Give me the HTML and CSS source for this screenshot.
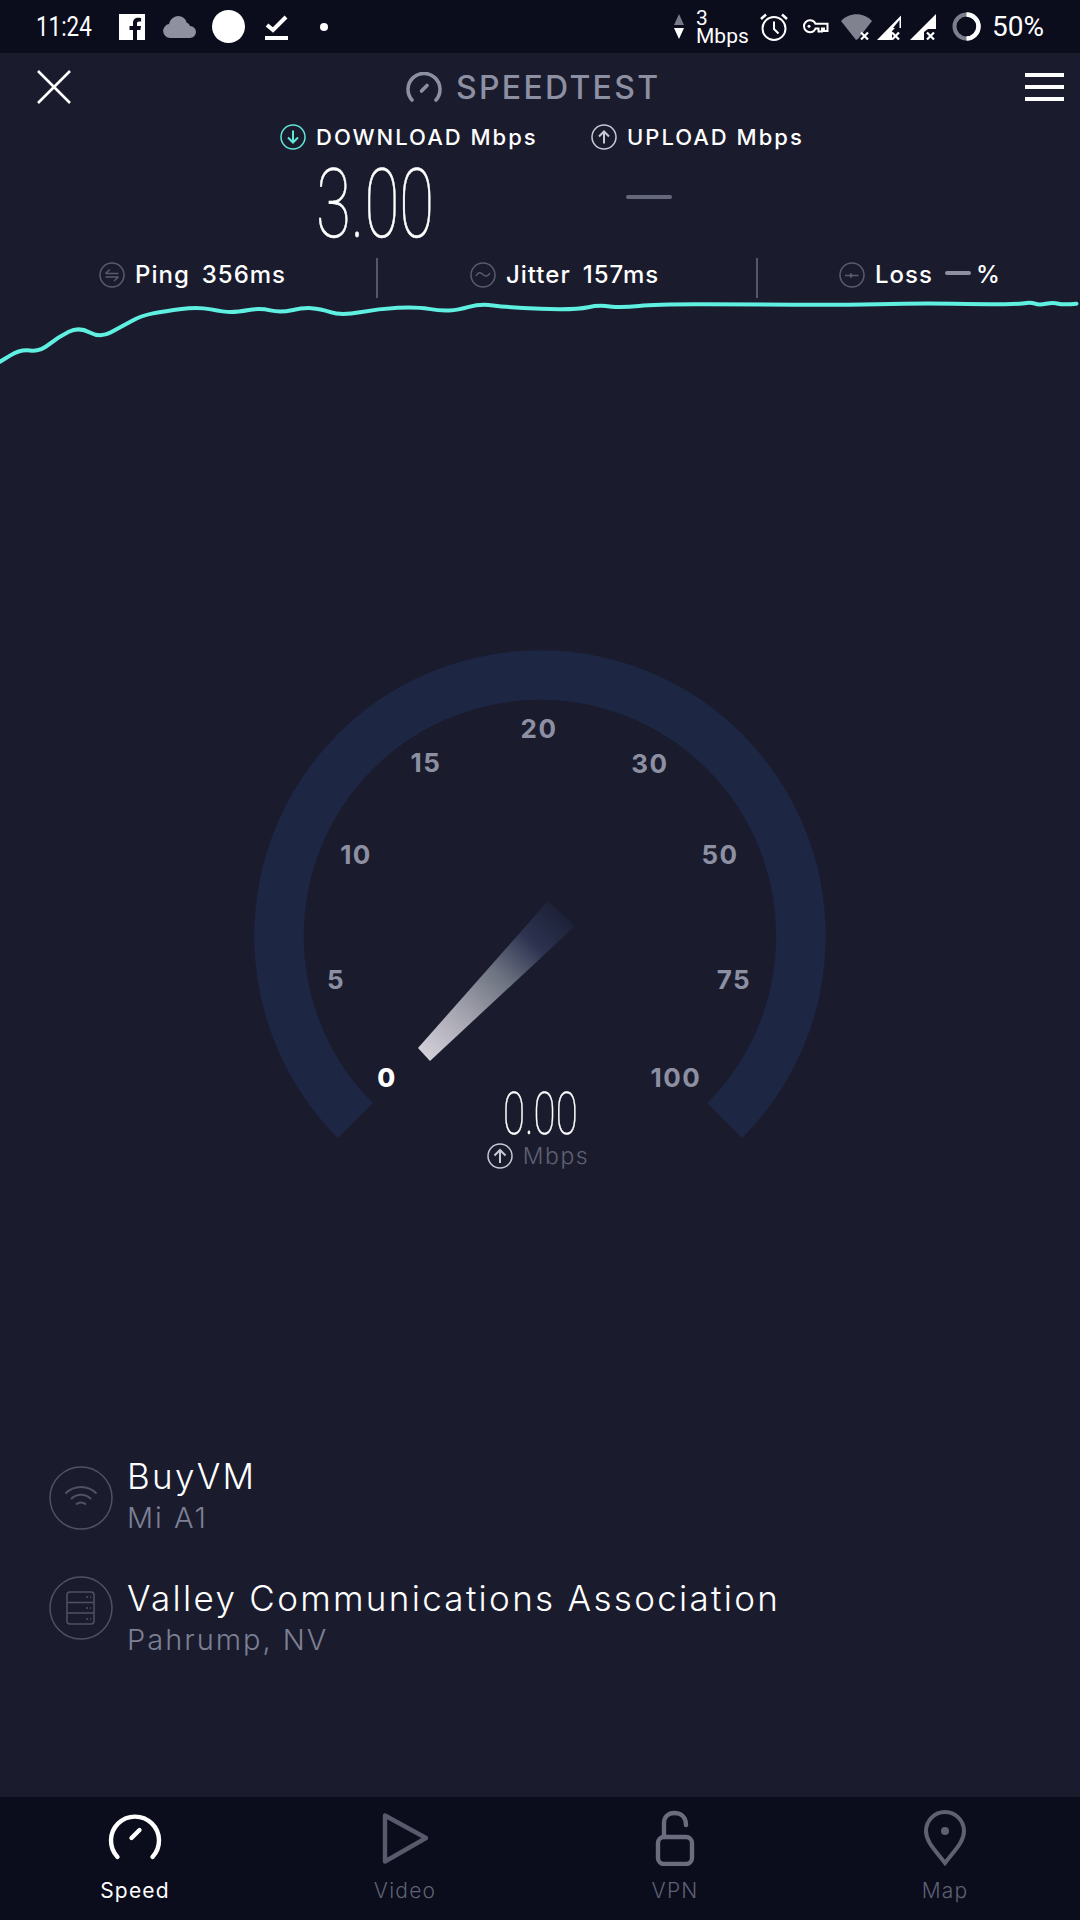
FILE: index.html
```html
<!DOCTYPE html>
<html lang="en">
<head>
<meta charset="utf-8">
<title>Speedtest</title>
<link rel="stylesheet" href="styles.css">
</head>
<body>
<div class="screen">
  <header class="status">
    <div class="status-left">
      <span class="status-time"><span class="status-time-text">11:24</span></span>
      <svg class="ic-f" viewBox="0 0 26 26"><path fill="#fff" d="M0 0h26v26H18v-10h3.400l.6-4h-4V9.500c0-1.200.5-2 2-2h2.100V3.900c-.6-.1-1.800-.2-3-.2-3 0-5.100 1.800-5.100 5.200V12H10.500v4H14v10H0z"/></svg>
      <svg class="ic-cloud" viewBox="0 0 33 22"><path fill="#8e90a0" d="M7 22a7 7 0 0 1-1-13.900A9.500 9.500 0 0 1 15 0a9 9 0 0 1 8.600 6.500A6 6 0 0 1 27 10a6 6 0 0 1 6 6 6 6 0 0 1-6 6z"/></svg>
      <span class="status-disc"></span>
      <svg class="ic-check" viewBox="0 0 23 26"><path fill="none" stroke="#fff" stroke-width="4" d="M2 11l6 5L21 3"/><path fill="#fff" d="M0 22h23v4H0z"/></svg>
      <span class="status-dot"></span>
    </div>
    <div class="status-right">
      <svg class="ic-updown" viewBox="0 0 12 25"><path fill="#77798a" d="M6 0l5 11H1z"/><path fill="#fff" d="M1 14h10L6 25z"/></svg>
      <span class="status-speed"><span>3</span><span>Mbps</span></span>
      <svg class="ic-alarm" viewBox="0 0 28 28"><g fill="none" stroke="#fff" stroke-width="2"><circle cx="14" cy="15.500" r="11.500"/><path d="M14 8.500v7.500l4.500 4.500"/></g><path fill="none" stroke="#fff" stroke-width="2.500" d="M1 6l5-4.500M27 6l-5-4.500"/></svg>
      <svg class="ic-key" viewBox="0 0 27 15"><path fill="none" stroke="#fff" stroke-width="2" d="M8 1.200a6 6 0 1 0 0 12 6 6 0 0 0 5.500-3.600h3v3h3.500v-3h2v2.500h3.500V4.800H13.500A6 6 0 0 0 8 1.200z"/><circle cx="7" cy="7.200" r="1.500" fill="#fff"/></svg>
      <svg class="ic-wifi" viewBox="0 0 31 26"><path fill="#80828f" d="M0 7C8-2 23-2 31 7L17 25 15 26z"/><path stroke="#fff" stroke-width="2.200" d="M20 18.500l7 7M27 18.500l-7 7"/></svg>
      <svg class="ic-sig" viewBox="0 0 26 26"><path fill="#fff" d="M0 26L24 1.500V14h-6l-3 3v9z"/><path fill="#0b0c1c" d="M16 14L22.500 6v8z"/><path stroke="#fff" stroke-width="2.200" d="M15 18.500l7 7M22 18.500l-7 7"/></svg>
      <svg class="ic-sig ic-sig-b" viewBox="0 0 26 26"><path fill="#fff" d="M0 26L26 0v15h-8l-4 3v8z"/><path stroke="#fff" stroke-width="2.200" d="M17 18.500l7 7M24 18.500l-7 7"/></svg>
      <svg class="ic-batt" viewBox="0 0 29 29"><circle cx="14.500" cy="14.500" r="12" fill="none" stroke="#7c7e8c" stroke-width="4"/><path fill="none" stroke="#fff" stroke-width="4.500" d="M14.500 2.500a12 12 0 0 1 0 24"/></svg>
      <span class="status-batt">50%</span>
    </div>
  </header>

  <div class="toolbar">
    <svg class="ic-close" viewBox="0 0 34 34"><path fill="none" stroke="#fff" stroke-width="2.600" d="M1 1l32 32M33 1L1 33"/></svg>
    <div class="brand">
      <svg class="ic-brand" viewBox="0 0 36 30"><g fill="none" stroke="#8d90a2" stroke-width="3.600" stroke-linecap="round"><path d="M6 28A16 16 0 1 1 30 28"/><path d="M15.500 19l5.500-5.500"/></g></svg>
      <span class="brand-name">SPEEDTEST</span>
    </div>
    <div class="menu"><span></span><span></span><span></span></div>
  </div>

  <section class="speeds">
    <div class="speed-col">
      <div class="speed-head">
        <svg class="ic-round" viewBox="0 0 26 26"><g fill="none" stroke="#62e6da" stroke-width="1.500"><circle cx="13" cy="13" r="12"/><path stroke-width="2" d="M13 6.500v12M8 13.500l5 5 5-5"/></g></svg>
        <span>DOWNLOAD Mbps</span>
      </div>
      <div class="speed-value"><span class="thin-num">3.00</span></div>
    </div>
    <div class="speed-col">
      <div class="speed-head">
        <svg class="ic-round" viewBox="0 0 26 26"><g fill="none" stroke="#c9c9d6" stroke-width="1.500"><circle cx="13" cy="13" r="12"/><path stroke-width="2" d="M13 19.500v-12M8 12.500l5-5 5 5"/></g></svg>
        <span>UPLOAD Mbps</span>
      </div>
      <div class="speed-dash"></div>
    </div>
  </section>

  <section class="stats">
    <div class="stat stat-ping">
      <svg class="ic-round" viewBox="0 0 26 26"><g fill="none" stroke="#595c6e" stroke-width="1.500"><circle cx="13" cy="13" r="12"/><path d="M6.500 11.500h13M11 7.500l-4.500 4M6.500 15h13M15 19l4.500-4"/></g></svg>
      <span class="stat-label">Ping</span><span class="stat-value">356ms</span>
    </div>
    <div class="stat stat-jitter">
      <svg class="ic-round" viewBox="0 0 26 26"><g fill="none" stroke="#595c6e" stroke-width="1.500"><circle cx="13" cy="13" r="12"/><path d="M6 14c2-4 4.500-4 7-1.500s5 2 7-1.500"/></g></svg>
      <span class="stat-label">Jitter</span><span class="stat-value">157ms</span>
    </div>
    <div class="stat stat-loss">
      <svg class="ic-round" viewBox="0 0 26 26"><g fill="none" stroke="#595c6e" stroke-width="1.500"><circle cx="13" cy="13" r="12"/><path d="M6 13.500h5l1.500-2-1 4 1.500-2h6.500"/></g></svg>
      <span class="stat-label">Loss</span><span class="stat-bar"></span><span class="stat-pct">%</span>
    </div>
  </section>

  <svg class="chart" viewBox="0 0 1080 70"><path fill="none" stroke="#5ff0e2" stroke-width="4" stroke-linecap="round" d="M0 63.700L10.400 57.400Q20.700 51 30.200 52.500Q39.600 54 49 46.400Q58.500 38.700 68.800 33.700Q79 28.700 89.800 34.400Q100.500 40 110.500 34.500Q120.500 29 130.800 23.400Q141 17.700 153 15.400Q165 13 181.500 10.900Q198 8.700 211 11.400Q224 14 230.800 14Q237.600 14 248.800 12Q260 10 270.300 12.400Q280.600 14.700 291.800 12.200Q303 9.700 311.500 10.200Q320 10.700 330.500 14.200Q341 17.700 360 14.200Q379 10.700 397.900 9.700Q416.700 8.700 428.800 10.900Q440.800 13 449.400 12.500Q458 12 469 8.900Q480 5.700 493 7.400Q506 9 523 10Q540 11 559 11.200Q578 11.300 588.300 9.200Q598.500 7 609.800 8.400Q621 9.700 639 7.900Q657 6 705 6.200Q753.500 6.300 795 6.700Q836 7 877.500 6.200Q919 5.300 953.300 5.800Q987.600 6.300 1004.800 6.200Q1022 6 1026.400 5Q1030.700 4 1034.900 5.700Q1039 7.300 1046 5.800Q1053 4.300 1058.200 5.700Q1063.400 7 1076.500 5.700"/></svg>

  <div class="gauge-wrap">
    <svg class="gauge" viewBox="0 0 600 560">
      <defs>
        <linearGradient id="needleFade" gradientUnits="userSpaceOnUse" x1="184" y1="414" x2="322" y2="270">
          <stop offset="0" stop-color="#d2cfd9"/>
          <stop offset=".28" stop-color="#a3a3ae"/>
          <stop offset=".55" stop-color="#6c7280"/>
          <stop offset=".78" stop-color="#2d3350"/>
          <stop offset="1" stop-color="#1c2036"/>
        </linearGradient>
      </defs>
      <path class="gauge-arc" d="M115.400 480.600A261 261 0 1 1 484.600 480.600"/>
      <polygon fill="url(#needleFade)" points="178,408 190,421 335,286 308,261"/>
      <text class="tick" x="299" y="96">20</text>
      <text class="tick" x="186" y="130">15</text>
      <text class="tick" x="410" y="131">30</text>
      <text class="tick" x="116" y="222">10</text>
      <text class="tick" x="480" y="222">50</text>
      <text class="tick" x="96" y="347">5</text>
      <text class="tick" x="494" y="347">75</text>
      <text class="tick tick-on" x="147" y="445">0</text>
      <text class="tick" x="436" y="445">100</text>
    </svg>
    <div class="gauge-read">
      <div class="gauge-num"><span class="thin-small">0.00</span></div>
      <div class="gauge-unit">
        <svg class="ic-up" viewBox="0 0 26 26"><g fill="none" stroke="#c9c9d6" stroke-width="1.500"><circle cx="13" cy="13" r="12"/><path stroke-width="2" d="M13 20v-13M7.500 12.500l5.500-5.500 5.500 5.500"/></g></svg>
        <span>Mbps</span>
      </div>
    </div>
  </div>

  <section class="servers">
    <div class="server">
      <svg class="ic-server" viewBox="0 0 64 64"><g fill="none" stroke="#4f5264" stroke-width="1.500"><circle cx="32" cy="32" r="31"/><g stroke-width="2"><path d="M16.500 27.500a22 22 0 0 1 31 0M22 33a14 14 0 0 1 20 0M27 38.500a7 7 0 0 1 10 0"/></g></g></svg>
      <div class="server-text"><div class="server-name">BuyVM</div><div class="server-sub">Mi A1</div></div>
    </div>
    <div class="server server-low">
      <svg class="ic-server" viewBox="0 0 64 64"><g fill="none" stroke="#4f5264" stroke-width="1.500"><circle cx="32" cy="32" r="31"/><rect x="18" y="16" width="27" height="32" rx="3"/><path d="M18 26.500h27M18 37h27"/><path d="M37 21h2M41 21h1M37 32h2M41 32h1M37 43h2M41 43h1"/></g></svg>
      <div class="server-text"><div class="server-name">Valley Communications Association</div><div class="server-sub">Pahrump, NV</div></div>
    </div>
  </section>

  <nav class="tabs">
    <div class="tab tab-on">
      <svg class="ic-tab" viewBox="0 0 56 56"><g fill="none" stroke="#fff" stroke-width="4.400" stroke-linecap="round"><path d="M10.500 47A24 24 0 1 1 45.500 47"/><path d="M24.500 28l8-8"/></g></svg>
      <span>Speed</span>
    </div>
    <div class="tab">
      <svg class="ic-tab" viewBox="0 0 56 56"><path fill="none" stroke="#585a6c" stroke-width="4.400" stroke-linejoin="round" d="M8 5.500v46L49 28z"/></svg>
      <span>Video</span>
    </div>
    <div class="tab">
      <svg class="ic-tab" viewBox="0 0 56 56"><g fill="none" stroke="#6b6d7e" stroke-width="4.400" stroke-linecap="round"><rect x="11" y="27" width="34" height="27" rx="6"/><path d="M17 26V13c0-6 4-10 10.500-10S39 7 39 15"/></g></svg>
      <span>VPN</span>
    </div>
    <div class="tab">
      <svg class="ic-tab" viewBox="0 0 56 56"><path fill="none" stroke="#5f6172" stroke-width="4" stroke-linejoin="miter" d="M28 53C18 40 9 32 9 21a19 19 0 0 1 38 0c0 11-9 19-19 32z"/><circle cx="28" cy="21" r="4" fill="#5f6172"/></svg>
      <span>Map</span>
    </div>
  </nav>
</div>
</body>
</html>
```

FILE: styles.css
```css
* { box-sizing: border-box; }
html, body { margin: 0; padding: 0; }
body { background: #1a1c2e; font-family: Inter, "Noto Sans", sans-serif; color: #fff; }
.screen { width: 1080px; height: 1920px; display: flex; flex-direction: column; overflow: hidden; background: #1a1c2e; }

.status { height: 53px; flex: none; background: #0b0c1c; display: flex; justify-content: space-between; align-items: center; font-family: Roboto, sans-serif; }
.status-left { display: flex; align-items: center; padding-left: 36px; }
.status-right { display: flex; align-items: center; padding-right: 36px; }
.status-time { font-size: 28px; width: 54px; white-space: nowrap; }
.status-time-text { display: block; transform: scaleX(.8); transform-origin: left center; }
.ic-f { width: 26px; height: 26px; margin-left: 29px; }
.ic-cloud { width: 33px; height: 22px; margin-left: 18px; }
.status-disc { width: 33px; height: 33px; border-radius: 50%; background: #fff; margin-left: 16px; }
.ic-check { width: 23px; height: 26px; margin-left: 20px; }
.status-dot { width: 8px; height: 8px; border-radius: 50%; background: #fff; margin-left: 32px; }
.ic-updown { width: 12px; height: 25px; }
.status-speed { display: flex; flex-direction: column; margin-left: 11px; width: 53px; font-size: 21px; line-height: 18px; }
.ic-alarm { width: 28px; height: 28px; margin-left: 11px; }
.ic-key { width: 27px; height: 15px; margin-left: 14px; }
.ic-wifi { width: 31px; height: 26px; margin-left: 12px; }
.ic-sig { width: 26px; height: 26px; margin-left: 5px; }
.ic-sig-b { margin-left: 7px; }
.ic-batt { width: 29px; height: 29px; margin-left: 16px; }
.status-batt { font-size: 28px; margin-left: 11px; }

.toolbar { height: 68px; flex: none; display: flex; align-items: center; padding: 0 16px 0 37px; }
.ic-close { width: 34px; height: 34px; margin-right: 335px; }
.brand { display: flex; align-items: center; gap: 14px; }
.ic-brand { width: 36px; height: 30px; }
.brand-name { font-size: 32px; font-weight: 500; letter-spacing: 2.3px; color: #8d90a2; }
.menu { display: flex; flex-direction: column; gap: 8px; width: 39px; margin-left: auto; }
.menu span { display: block; height: 4px; background: #fff; }

.speeds { height: 137px; flex: none; display: grid; grid-template-columns: 311px 1fr; padding: 1px 0 0 280px; }
.speed-head { display: flex; align-items: center; gap: 10px; height: 30px; font-size: 22px; font-weight: 500; letter-spacing: 2px; white-space: nowrap; }
.ic-round { width: 26px; height: 26px; flex: none; }
.speed-value { padding-left: 36px; height: 90px; padding-top: 2px; }
.thin-num { display: block; font-family: Roboto, sans-serif; font-weight: 100; font-size: 97px; line-height: 100px; -webkit-text-stroke: .6px #fff; transform: scaleX(.655); transform-origin: left top; white-space: nowrap; }
.speed-dash { width: 46px; height: 4px; margin: 43px 0 0 35px; background: #65687a; border-radius: 2px; }

.stats { height: 40px; flex: none; display: grid; grid-template-columns: 376px 380px 324px; }
.stat { display: flex; align-items: center; padding-bottom: 7px; font-size: 24px; font-weight: 500; letter-spacing: 1px; white-space: nowrap; }
.stat-ping { padding-left: 99px; }
.stat-jitter { padding-left: 92px; border-left: 2px solid #565869; }
.stat-loss { padding-left: 81px; border-left: 2px solid #565869; }
.stat-label { margin-left: 10px; }
.stat-value { margin-left: 12px; }
.stat-bar { width: 26px; height: 4px; background: #8d90a2; border-radius: 2px; margin: 0 5px 4px 12px; }

.chart { display: block; width: 1080px; height: 70px; flex: none; }

.gauge-wrap { width: 600px; height: 560px; flex: none; margin: 272px 0 0 240px; position: relative; }
.gauge { display: block; width: 600px; height: 560px; }
.gauge-arc { fill: none; stroke: #1d2642; stroke-width: 49.500; }
.tick { fill: #8d90a2; font-size: 26px; font-weight: 700; letter-spacing: 1.5px; text-anchor: middle; dominant-baseline: central; transform: translateY(-8px); }
.tick-on { fill: #fff; font-weight: 800; }
.gauge-read { position: absolute; left: 0; right: 0; top: 444px; display: flex; flex-direction: column; align-items: center; }
.gauge-num { height: 55px; width: 74px; }
.thin-small { display: block; font-family: Roboto, sans-serif; font-weight: 100; font-size: 60px; line-height: 60px; -webkit-text-stroke: .5px #fff; transform: scaleX(.67); transform-origin: left top; white-space: nowrap; }
.gauge-unit { display: flex; align-items: center; gap: 10px; font-size: 23px; font-weight: 300; letter-spacing: 1.5px; color: #5e6073; margin-top: 3px; margin-left: -4px; }
.ic-up { width: 26px; height: 26px; }

.servers { flex: none; margin-top: 254px; display: flex; flex-direction: column; gap: 38px; padding-left: 49px; }
.server { display: flex; align-items: center; gap: 14px; height: 84px; }
.ic-server { width: 64px; height: 64px; flex: none; margin-top: 4px; }
.server-low .ic-server { margin: 0 0 20px; }
.server-name { font-size: 35px; font-weight: 300; line-height: 44px; letter-spacing: 2.3px; white-space: nowrap; }
.server-sub { font-size: 29px; font-weight: 300; line-height: 40px; letter-spacing: 2px; color: #7d8094; }

.tabs { margin-top: auto; height: 123px; flex: none; background: #0b0c1c; display: grid; grid-template-columns: repeat(4, 270px); }
.tab { display: flex; flex-direction: column; align-items: center; font-size: 21px; font-weight: 300; letter-spacing: 1.2px; color: #5e6073; padding-top: 13px; }
.tab-on { color: #fff; font-weight: 400; }
.ic-tab { width: 56px; height: 56px; margin-bottom: 12px; }
```
